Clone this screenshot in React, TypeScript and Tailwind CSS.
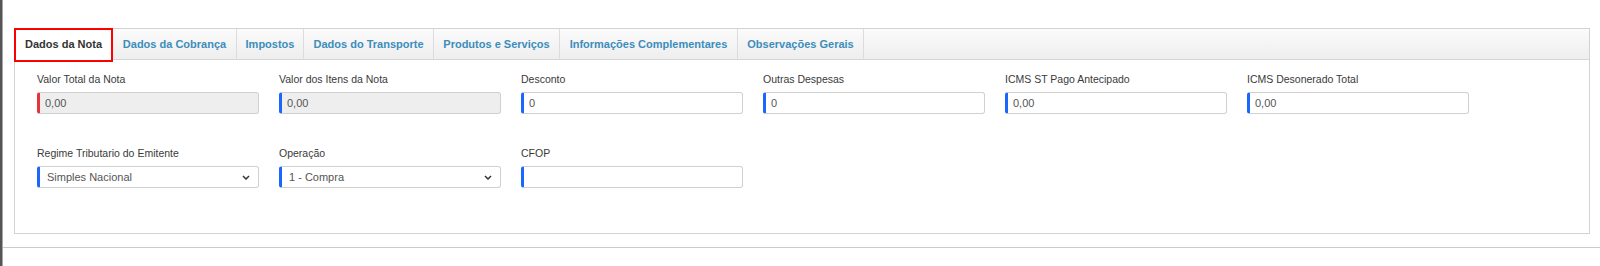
const tabs = [
  { label: 'Dados da Nota', w: 'w-[98px]', active: true },
  { label: 'Dados da Cobrança', w: 'w-[124px]' },
  { label: 'Impostos', w: 'w-[67px]' },
  { label: 'Dados do Transporte', w: 'w-[130px]' },
  { label: 'Produtos e Serviços', w: 'w-[126px]' },
  { label: 'Informações Complementares', w: 'w-[178px]' },
  { label: 'Observações Gerais', w: 'w-[126px]' },
];

const valores = [
  { label: 'Valor Total da Nota', value: '0,00', disabled: true, erro: true },
  { label: 'Valor dos Itens da Nota', value: '0,00', disabled: true },
  { label: 'Desconto', value: '0' },
  { label: 'Outras Despesas', value: '0' },
  { label: 'ICMS ST Pago Antecipado', value: '0,00' },
  { label: 'ICMS Desonerado Total', value: '0,00' },
];

function Chevron() {
  return (
    <svg
      className="pointer-events-none absolute right-[9px] top-[9px]"
      width="8"
      height="5"
      viewBox="0 0 8 5"
    >
      <polyline points="1,1 4,4 7,1" fill="none" stroke="#333" strokeWidth="1.5" />
    </svg>
  );
}

function Campo({ label, children }: { label: string; children: React.ReactNode }) {
  return (
    <div className="w-[222px]">
      <div className="h-[15px] text-[10.5px] leading-[15px] text-[#3a3a3a]">{label}</div>
      <div className="relative mt-[5px]">{children}</div>
    </div>
  );
}

const inputBase =
  'block h-[22px] w-[222px] rounded-[3px] border border-l-[3px] border-[#d0d0d0] text-[11px] text-[#555] outline-none';

export default function App() {
  return (
    <div className="flex h-[266px] w-[1600px] bg-white font-['Liberation_Sans',Arial,sans-serif]">
      <div className="flex h-full w-[3px]">
        <div className="w-[2px] bg-[#555]" />
        <div className="w-px bg-[#a8a8a8]" />
      </div>

      <div className="flex-1">
        <div className="ml-[11px] mt-[28px] w-[1576px] border border-[#d2d2d2]">
          <div className="flex h-[31px] border-b border-[#d6d6d6] bg-gradient-to-b from-[#fbfbfb] to-[#eeeeee]">
            {tabs.map((t) => (
              <div
                key={t.label}
                className={`relative flex h-[30px] items-center justify-center border-r border-[#dcdcdc] text-[11px] font-bold ${t.w} ${
                  t.active ? 'h-[31px] bg-white text-[#333]' : 'text-[#3c8dbc]'
                }`}
              >
                {t.label}
                {t.active && (
                  <span className="absolute -left-px -top-px -right-px -bottom-[2px] border-2 border-[#f00]" />
                )}
              </div>
            ))}
          </div>

          <div className="pb-[45px] pl-[22px] pt-[12px]">
            <div className="flex gap-[20px]">
              {valores.map((v) => (
                <Campo key={v.label} label={v.label}>
                  <input
                    readOnly
                    value={v.value}
                    className={`${inputBase} pl-[5px] ${
                      v.erro ? 'border-l-[#e5343c]' : 'border-l-[#1a66ff]'
                    } ${v.disabled ? 'bg-[#eeeeee]' : 'bg-white'}`}
                  />
                </Campo>
              ))}
            </div>

            <div className="mt-[32px] flex gap-[20px]">
              <Campo label="Regime Tributario do Emitente">
                <select
                  defaultValue="sn"
                  className={`${inputBase} appearance-none border-l-[#1a66ff] bg-white pl-[7px] text-[#444]`}
                >
                  <option value="sn">Simples Nacional</option>
                </select>
                <Chevron />
              </Campo>
              <Campo label="Operação">
                <select
                  defaultValue="1"
                  className={`${inputBase} appearance-none border-l-[#1a66ff] bg-white pl-[7px] text-[#444]`}
                >
                  <option value="1">1 - Compra</option>
                </select>
                <Chevron />
              </Campo>
              <Campo label="CFOP">
                <input readOnly value="" className={`${inputBase} border-l-[#1a66ff] bg-white pl-[5px]`} />
              </Campo>
            </div>
          </div>
        </div>

        <div className="mt-[13px] border-t border-[#cbcbcb]" />
      </div>
    </div>
  );
}
